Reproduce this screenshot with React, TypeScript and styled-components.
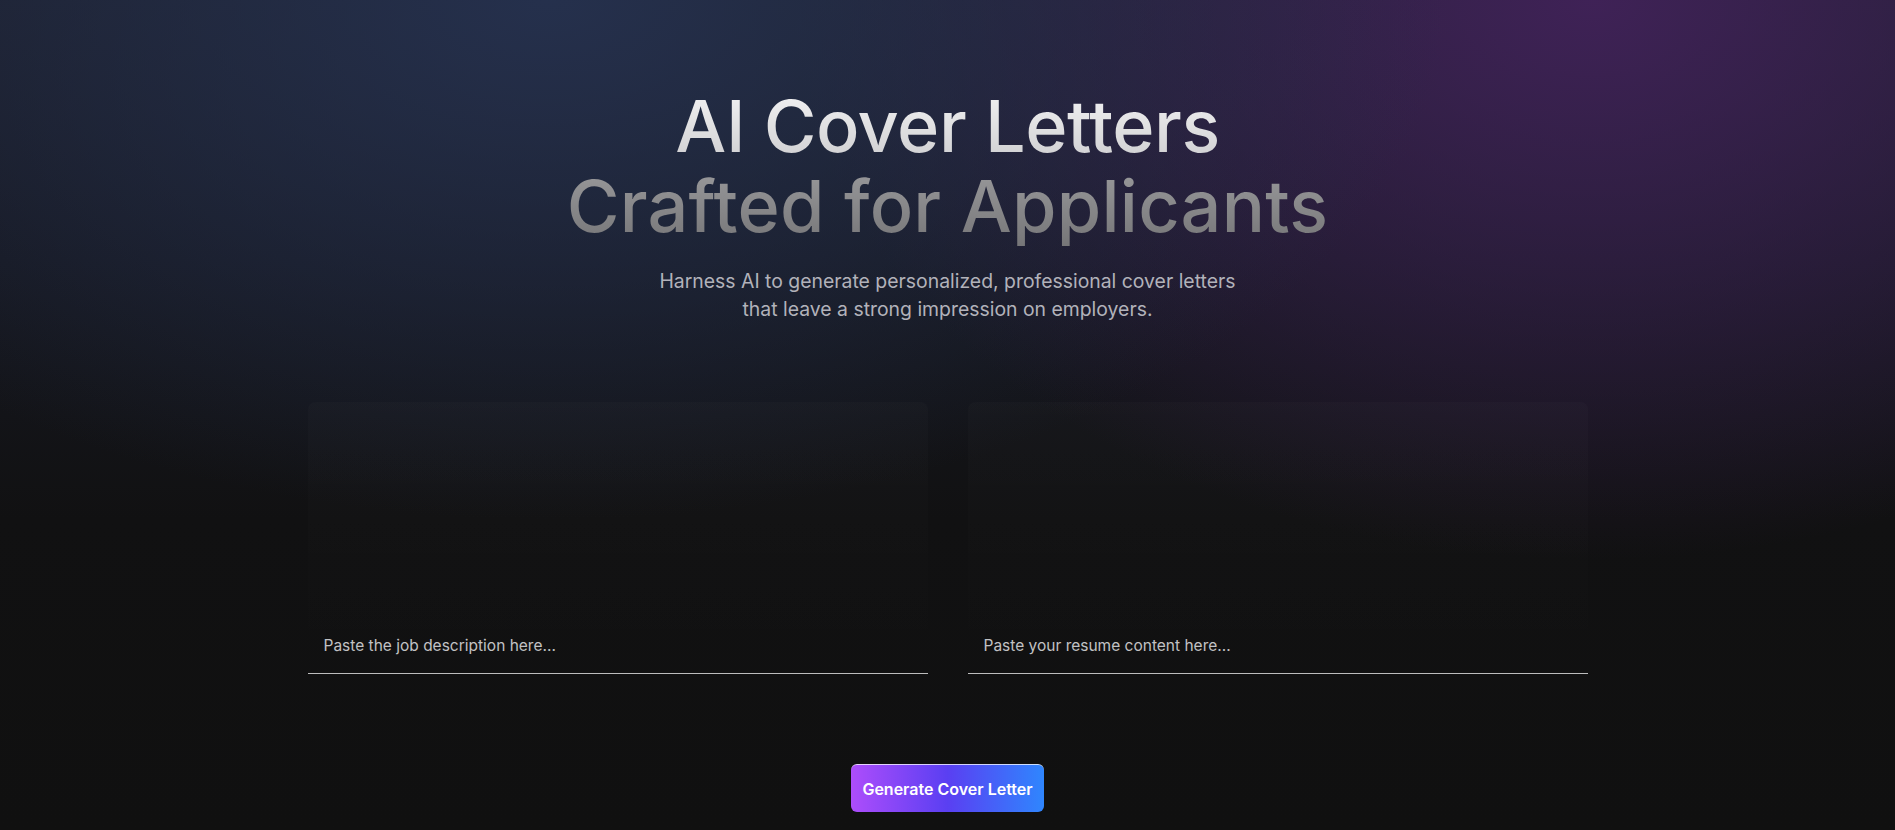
import React from "react";
import styled, { createGlobalStyle } from "styled-components";

const GlobalStyle = createGlobalStyle`
  html, body { margin: 0; padding: 0; background: #101010; }
  body { font-family: Inter, "Noto Sans", sans-serif; -webkit-font-smoothing: antialiased; }
  * { box-sizing: border-box; }
`;

const Page = styled.main`
  min-height: 830px;
  display: flex;
  flex-direction: column;
  align-items: center;
  background:
    radial-gradient(ellipse 900px 520px at 29% 0%, rgba(38, 50, 80, 0.9), rgba(38, 50, 80, 0) 100%),
    radial-gradient(ellipse 800px 560px at 84% 0%, rgba(66, 34, 90, 0.92), rgba(66, 34, 90, 0) 100%),
    linear-gradient(to bottom, #1c1f2c 0px, #161821 260px, #111112 520px, #101010 100%);
`;

const Hero = styled.header`
  display: flex;
  flex-direction: column;
  align-items: center;
  padding-top: 86px;
  text-align: center;
`;

const Title = styled.h1`
  margin: 0;
  font-family: Inter, sans-serif;
  font-weight: 500;
  font-size: 72px;
  line-height: 80px;
  display: flex;
  flex-direction: column;
`;

const TitleLine = styled.span<{ $muted?: boolean }>`
  background: ${(p) =>
    p.$muted
      ? "linear-gradient(to bottom, #9a9a9c, #767678)"
      : "linear-gradient(to bottom, #f4f4f5, #cdcdcf)"};
  -webkit-background-clip: text;
  background-clip: text;
  color: transparent;
  letter-spacing: ${(p) => (p.$muted ? "0.2px" : "-0.5px")};
`;

const Subtitle = styled.p`
  margin: 21px 0 0;
  font-family: Inter, sans-serif;
  font-size: 19.4px;
  line-height: 28px;
  color: #b2b2ba;
  max-width: 600px;
`;

const Grid = styled.section`
  width: 1280px;
  margin-top: 79px;
  display: grid;
  grid-template-columns: 1fr 1fr;
  gap: 40px;
`;

const Field = styled.textarea`
  display: block;
  width: 100%;
  height: 272px;
  resize: none;
  border: none;
  border-bottom: 1px solid #bdbdbd;
  border-radius: 8px 8px 0 0;
  background: linear-gradient(to bottom, rgba(255, 255, 255, 0.015), rgba(255, 255, 255, 0.004) 70%, rgba(255,255,255,0.0));
  padding: 232px 16px 16px;
  font-family: Inter, sans-serif;
  font-size: 15.5px;
  line-height: 24px;
  color: #e5e5e5;
  outline: none;
  &::placeholder { color: #c2c2c4; }
`;

const Actions = styled.div`
  margin-top: 90px;
  display: flex;
  justify-content: center;
`;

const GenerateButton = styled.button`
  width: 193px;
  height: 48px;
  border: none;
  border-top: 1px solid rgba(255, 255, 255, 0.75);
  border-radius: 6px;
  background: linear-gradient(to right, #ad4dfb 0%, #5a3ff2 50%, #2f86fe 100%);
  color: #ffffff;
  font-family: Inter, sans-serif;
  font-weight: 600;
  font-size: 16px;
  cursor: pointer;
`;

export default function App() {
  return (
    <>
      <GlobalStyle />
      <Page>
        <Hero>
          <Title>
            <TitleLine>AI Cover Letters</TitleLine>
            <TitleLine $muted>Crafted for Applicants</TitleLine>
          </Title>
          <Subtitle>
            Harness AI to generate personalized, professional cover letters
            <br />
            that leave a strong impression on employers.
          </Subtitle>
        </Hero>
        <Grid>
          <Field placeholder="Paste the job description here..." />
          <Field placeholder="Paste your resume content here..." />
        </Grid>
        <Actions>
          <GenerateButton>Generate Cover Letter</GenerateButton>
        </Actions>
      </Page>
    </>
  );
}
